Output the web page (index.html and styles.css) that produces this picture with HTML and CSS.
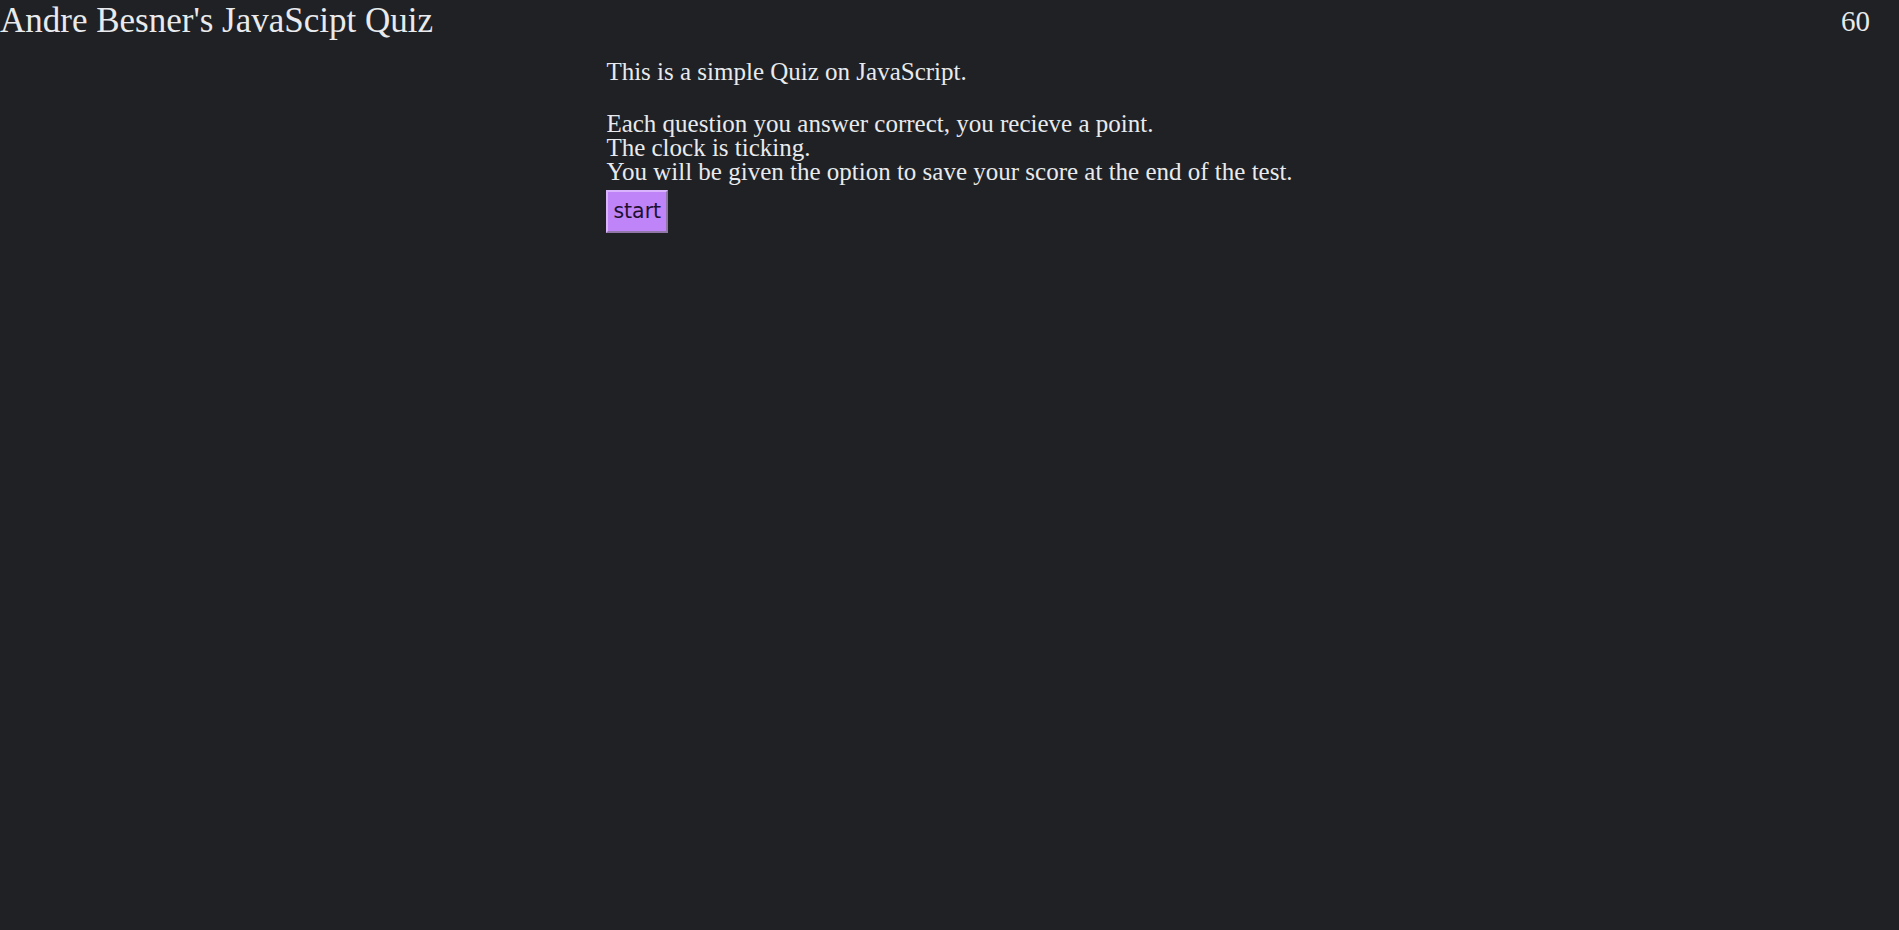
FILE: index.html
```html
<!DOCTYPE html>
<html>
<head>
<meta charset="utf-8">
<title>Quiz</title>
<link rel="stylesheet" href="styles.css">
</head>
<body>
<header class="top">
  <h1 class="title">Andre Besner's JavaScipt Quiz</h1>
  <div class="timer">60</div>
</header>
<main class="intro">
  <p class="lead">This is a simple Quiz on JavaScript.</p>
  <p class="rules">Each question you answer correct, you recieve a point.<br>The clock is ticking.<br>You will be given the option to save your score at the end of the test.</p>
  <button class="start">start</button>
</main>
</body>
</html>
```
FILE: styles.css
```css
html, body {
  margin: 0;
  padding: 0;
  background: #202124;
  color: #e8eaed;
  font-family: "Liberation Serif", "Times New Roman", serif;
}
.top {
  display: flex;
  justify-content: space-between;
  align-items: flex-start;
}
.title {
  margin: 1px 0 0;
  font-weight: normal;
  font-size: 35px;
}
.timer {
  font-size: 29px;
  padding-top: 4.5px;
  padding-right: 29px;
}
.intro {
  width: fit-content;
  margin: 19px auto 0;
  font-size: 25px;
  line-height: 24px;
}
.lead {
  margin: 0 0 28px;
}
.rules {
  margin: 0;
}
.start {
  display: block;
  margin-top: 6px;
  font-family: "DejaVu Sans", Verdana, sans-serif;
  font-size: 20.5px;
  line-height: 23px;
  background: #bf84f7;
  color: #1e1130;
  border: 2px outset #d9b3fb;
  padding: 8px 5px;
}
```
